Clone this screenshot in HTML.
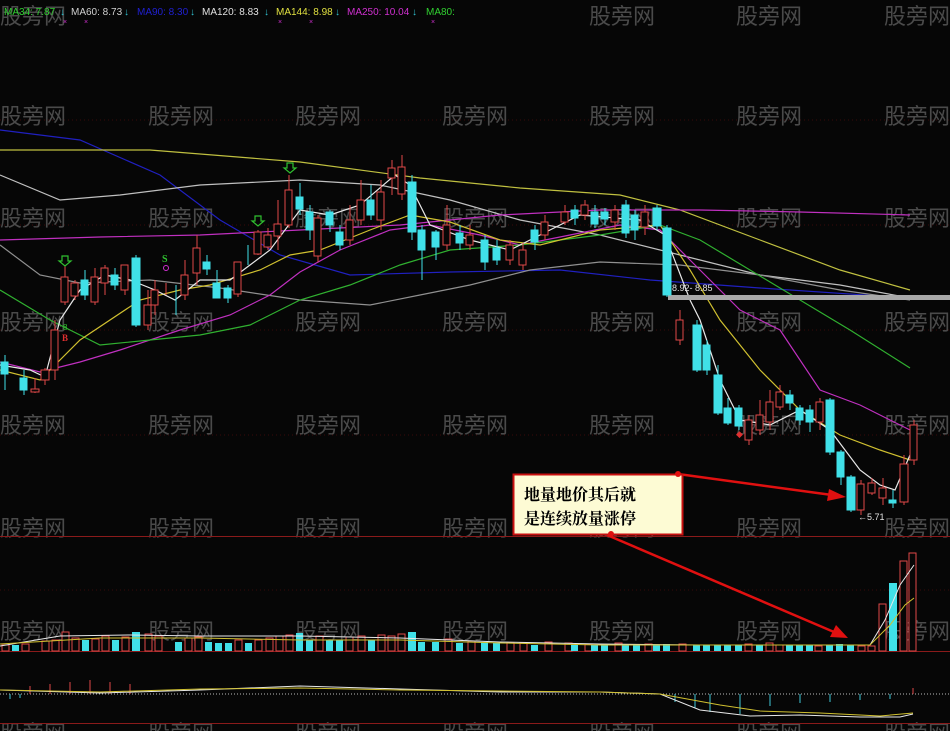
<!DOCTYPE html>
<html><head><meta charset="utf-8"><style>
html,body{margin:0;padding:0;background:#060606;}
svg{display:block}
.wm{font-family:"Liberation Sans","Noto Sans CJK SC",sans-serif;font-size:22px;fill:#4a4a4a;}
.lg{font-family:"Liberation Sans",sans-serif;font-size:10px;}
</style></head><body>
<svg width="950" height="731" viewBox="0 0 950 731" xmlns="http://www.w3.org/2000/svg">
<rect width="950" height="731" fill="#060606"/>
<!-- grid dotted -->
<g stroke="#3a0a0a" stroke-dasharray="1,3">
<line x1="0" y1="120" x2="950" y2="120"/><line x1="0" y1="225" x2="950" y2="225"/>
<line x1="0" y1="330" x2="950" y2="330"/><line x1="0" y1="435" x2="950" y2="435"/>
<line x1="0" y1="590" x2="950" y2="590"/>
</g>
<!-- watermarks -->
<g class="wm">
<text x="0" y="24">股旁网</text><text x="589" y="24">股旁网</text><text x="736" y="24">股旁网</text><text x="884" y="24">股旁网</text>
<text x="0" y="124">股旁网</text><text x="148" y="124">股旁网</text><text x="295" y="124">股旁网</text><text x="442" y="124">股旁网</text><text x="589" y="124">股旁网</text><text x="736" y="124">股旁网</text><text x="884" y="124">股旁网</text>
<text x="0" y="226">股旁网</text><text x="148" y="226">股旁网</text><text x="295" y="226">股旁网</text><text x="442" y="226">股旁网</text><text x="589" y="226">股旁网</text><text x="736" y="226">股旁网</text><text x="884" y="226">股旁网</text>
<text x="0" y="330">股旁网</text><text x="148" y="330">股旁网</text><text x="295" y="330">股旁网</text><text x="442" y="330">股旁网</text><text x="589" y="330">股旁网</text><text x="736" y="330">股旁网</text><text x="884" y="330">股旁网</text>
<text x="0" y="433">股旁网</text><text x="148" y="433">股旁网</text><text x="295" y="433">股旁网</text><text x="442" y="433">股旁网</text><text x="589" y="433">股旁网</text><text x="736" y="433">股旁网</text><text x="884" y="433">股旁网</text>
<text x="0" y="536">股旁网</text><text x="148" y="536">股旁网</text><text x="295" y="536">股旁网</text><text x="442" y="536">股旁网</text><text x="589" y="536">股旁网</text><text x="736" y="536">股旁网</text><text x="884" y="536">股旁网</text>
<text x="0" y="639">股旁网</text><text x="148" y="639">股旁网</text><text x="295" y="639">股旁网</text><text x="442" y="639">股旁网</text><text x="589" y="639">股旁网</text><text x="736" y="639">股旁网</text><text x="884" y="639">股旁网</text>
<text x="0" y="741">股旁网</text><text x="148" y="741">股旁网</text><text x="295" y="741">股旁网</text><text x="442" y="741">股旁网</text><text x="589" y="741">股旁网</text><text x="736" y="741">股旁网</text><text x="884" y="741">股旁网</text>
</g>
<!-- legend -->
<g class="lg">
<text x="4" y="15" fill="#30d030">MA34: 7.87</text><text x="60" y="15" fill="#30c0d0">↓</text>
<text x="71" y="15" fill="#d0d0d0">MA60: 8.73</text><text x="124" y="15" fill="#30c0d0">↓</text>
<text x="137" y="15" fill="#2020d0">MA90: 8.30</text><text x="190" y="15" fill="#30c0d0">↓</text>
<text x="202" y="15" fill="#e0e0e0">MA120: 8.83</text><text x="264" y="15" fill="#30c0d0">↓</text>
<text x="276" y="15" fill="#e0e040">MA144: 8.98</text><text x="335" y="15" fill="#30c0d0">↓</text>
<text x="347" y="15" fill="#d030d0">MA250: 10.04</text><text x="412" y="15" fill="#30c0d0">↓</text>
<text x="426" y="15" fill="#30d030">MA80: </text>
</g>
<g fill="#d030d0" font-size="7" font-family="Liberation Sans"><text x="63" y="24">×</text><text x="84" y="24">×</text><text x="278" y="24">×</text><text x="309" y="24">×</text><text x="431" y="24">×</text></g>
<!-- MA lines -->
<g fill="none" stroke-width="1.2">
<polyline stroke="#2020c0" points="0,130 80,140 160,175 220,220 280,255 350,275 450,272 560,270 650,280 760,288 910,298"/>
<polyline stroke="#c0c040" points="0,150 150,150 300,162 420,178 520,188 620,195 680,210 760,240 840,270 910,290"/>
<polyline stroke="#c0c0c0" points="0,175 60,200 120,195 200,185 300,180 380,185 450,200 520,220 600,235 680,255 760,275 840,285 910,298"/>
<polyline stroke="#909090" points="0,245 40,275 80,283 150,280 220,288 300,300 370,305 420,295 470,285 530,270 600,262 680,265 760,275 840,290 910,300"/>
<polyline stroke="#c030c0" points="0,240 100,237 200,235 300,230 400,225 500,215 600,210 700,210 800,212 910,215"/>
<polyline stroke="#c030c0" points="0,362 40,372 80,362 120,350 180,330 230,315 270,295 300,272 340,250 390,230 430,225 480,235 520,245 570,235 620,225 660,230 700,270 740,310 780,330 820,390 860,405 910,430"/>
<polyline stroke="#30b030" points="0,290 50,320 100,345 150,340 200,335 250,325 300,300 350,285 400,265 450,250 520,245 600,235 660,225 700,240 750,270 800,300 850,330 910,368"/>
<polyline stroke="#d0c030" points="0,370 40,380 80,340 140,300 180,290 210,285 260,270 290,255 320,250 370,230 410,215 450,222 500,240 540,245 600,230 660,225 690,270 720,320 760,370 800,410 840,435 880,450 910,460"/>
<polyline stroke="#e8e8e8" points="0,365 30,370 45,377 60,320 80,290 105,275 130,280 155,290 175,300 200,280 230,280 250,265 270,250 300,210 330,215 360,205 395,175 410,185 430,225 470,240 510,250 540,235 580,215 640,220 665,235 690,300 700,320 720,380 740,420 770,425 800,410 830,430 860,470 880,485 895,490 910,455"/>
</g>
<rect x="668" y="295" width="282" height="5" fill="#a8a8a8"/>
<text x="672" y="291" fill="#e0e0e0" font-size="9" font-family="Liberation Sans">8.92- 8.85</text>
<!-- candles -->
<g stroke="#e04848" fill="#060606" stroke-width="1">
<line x1="35" y1="378" x2="35" y2="393"/><rect x="31" y="389" width="8" height="3"/>
<line x1="45" y1="368" x2="45" y2="385"/><rect x="41" y="370" width="8" height="10"/>
<line x1="55" y1="320" x2="55" y2="380"/><rect x="51" y="330" width="7" height="40"/>
<line x1="65" y1="265" x2="65" y2="305"/><rect x="61" y="277" width="7" height="25"/>
<line x1="75" y1="280" x2="75" y2="300"/><rect x="71" y="283" width="7" height="13"/>
<line x1="95" y1="268" x2="95" y2="305"/><rect x="91" y="277" width="7" height="25"/>
<line x1="105" y1="265" x2="105" y2="295"/><rect x="101" y="268" width="7" height="15"/>
<line x1="125" y1="265" x2="125" y2="295"/><rect x="121" y="265" width="7" height="25"/>
<line x1="148" y1="290" x2="148" y2="330"/><rect x="144" y="305" width="7" height="20"/>
<line x1="155" y1="280" x2="155" y2="315"/><rect x="151" y="290" width="7" height="15"/>
<line x1="166" y1="283" x2="166" y2="295"/>
<line x1="185" y1="260" x2="185" y2="300"/><rect x="181" y="275" width="7" height="20"/>
<line x1="197" y1="235" x2="197" y2="285"/><rect x="193" y="248" width="7" height="25"/>
<line x1="238" y1="262" x2="238" y2="297"/><rect x="234" y="262" width="7" height="32"/>
<line x1="258" y1="230" x2="258" y2="255"/><rect x="254" y="232" width="7" height="22"/>
<line x1="268" y1="228" x2="268" y2="250"/><rect x="264" y="235" width="7" height="12"/>
<line x1="278" y1="200" x2="278" y2="250"/><rect x="274" y="224" width="7" height="12"/>
<line x1="289" y1="175" x2="289" y2="228"/><rect x="285" y="190" width="7" height="35"/>
<line x1="318" y1="215" x2="318" y2="262"/><rect x="314" y="218" width="7" height="38"/>
<line x1="350" y1="205" x2="350" y2="245"/><rect x="346" y="220" width="7" height="20"/>
<line x1="361" y1="180" x2="361" y2="225"/><rect x="357" y="200" width="7" height="20"/>
<line x1="381" y1="180" x2="381" y2="230"/><rect x="377" y="192" width="7" height="28"/>
<line x1="392" y1="160" x2="392" y2="195"/><rect x="388" y="168" width="7" height="10"/>
<line x1="402" y1="155" x2="402" y2="200"/><rect x="398" y="167" width="7" height="27"/>
<line x1="447" y1="205" x2="447" y2="250"/><rect x="443" y="225" width="7" height="20"/>
<line x1="470" y1="225" x2="470" y2="250"/><rect x="466" y="235" width="7" height="10"/>
<line x1="510" y1="240" x2="510" y2="265"/><rect x="506" y="245" width="7" height="15"/>
<line x1="523" y1="243" x2="523" y2="270"/><rect x="519" y="250" width="7" height="15"/>
<line x1="545" y1="215" x2="545" y2="240"/><rect x="541" y="222" width="7" height="13"/>
<line x1="565" y1="205" x2="565" y2="225"/><rect x="561" y="212" width="7" height="10"/>
<line x1="585" y1="200" x2="585" y2="220"/><rect x="581" y="205" width="7" height="10"/>
<line x1="615" y1="205" x2="615" y2="230"/><rect x="611" y="210" width="7" height="12"/>
<line x1="645" y1="205" x2="645" y2="235"/><rect x="641" y="212" width="7" height="15"/>
<line x1="680" y1="310" x2="680" y2="345"/><rect x="676" y="320" width="7" height="20"/>
<line x1="749" y1="415" x2="749" y2="445"/><rect x="745" y="420" width="7" height="20"/>
<line x1="760" y1="400" x2="760" y2="435"/><rect x="756" y="415" width="7" height="15"/>
<line x1="770" y1="390" x2="770" y2="430"/><rect x="766" y="402" width="7" height="20"/>
<line x1="780" y1="385" x2="780" y2="410"/><rect x="776" y="392" width="7" height="15"/>
<line x1="820" y1="398" x2="820" y2="430"/><rect x="816" y="402" width="7" height="20"/>
<line x1="861" y1="480" x2="861" y2="515"/><rect x="857" y="484" width="7" height="26"/>
<line x1="872" y1="478" x2="872" y2="495"/><rect x="868" y="483" width="7" height="10"/>
<line x1="883" y1="478" x2="883" y2="505"/><rect x="879" y="488" width="7" height="10"/>
<line x1="904" y1="455" x2="904" y2="505"/><rect x="900" y="464" width="8" height="38"/>
<line x1="914" y1="420" x2="914" y2="465"/><rect x="910" y="425" width="7" height="35"/>
</g>
<g fill="#40e0e8" stroke="#40e0e8" stroke-width="1">
<line x1="5" y1="355" x2="5" y2="390"/><rect x="1" y="362" width="7" height="12"/>
<line x1="24" y1="370" x2="24" y2="395"/><rect x="20" y="378" width="7" height="12"/>
<line x1="85" y1="270" x2="85" y2="300"/><rect x="81" y="280" width="7" height="15"/>
<line x1="115" y1="268" x2="115" y2="290"/><rect x="111" y="275" width="7" height="10"/>
<line x1="136" y1="255" x2="136" y2="327"/><rect x="132" y="258" width="8" height="67"/>
<line x1="176" y1="285" x2="176" y2="315"/>
<line x1="207" y1="255" x2="207" y2="275"/><rect x="203" y="262" width="7" height="7"/>
<line x1="217" y1="270" x2="217" y2="297"/><rect x="213" y="283" width="7" height="15"/>
<line x1="228" y1="285" x2="228" y2="303"/><rect x="224" y="288" width="7" height="10"/>
<line x1="248" y1="245" x2="248" y2="265"/>
<line x1="300" y1="183" x2="300" y2="215"/><rect x="296" y="197" width="7" height="12"/>
<line x1="310" y1="205" x2="310" y2="240"/><rect x="306" y="212" width="7" height="18"/>
<line x1="330" y1="210" x2="330" y2="232"/><rect x="326" y="212" width="7" height="13"/>
<line x1="340" y1="225" x2="340" y2="250"/><rect x="336" y="232" width="7" height="13"/>
<line x1="371" y1="185" x2="371" y2="220"/><rect x="367" y="200" width="7" height="15"/>
<line x1="412" y1="175" x2="412" y2="240"/><rect x="408" y="182" width="8" height="50"/>
<line x1="422" y1="225" x2="422" y2="280"/><rect x="418" y="230" width="7" height="20"/>
<line x1="436" y1="230" x2="436" y2="260"/><rect x="432" y="232" width="7" height="15"/>
<line x1="460" y1="225" x2="460" y2="250"/><rect x="456" y="233" width="7" height="10"/>
<line x1="485" y1="235" x2="485" y2="270"/><rect x="481" y="240" width="7" height="22"/>
<line x1="497" y1="240" x2="497" y2="265"/><rect x="493" y="248" width="7" height="12"/>
<line x1="535" y1="225" x2="535" y2="250"/><rect x="531" y="230" width="7" height="12"/>
<line x1="575" y1="205" x2="575" y2="225"/><rect x="571" y="210" width="7" height="8"/>
<line x1="595" y1="205" x2="595" y2="228"/><rect x="591" y="212" width="7" height="12"/>
<line x1="605" y1="208" x2="605" y2="225"/><rect x="601" y="212" width="7" height="7"/>
<line x1="626" y1="200" x2="626" y2="238"/><rect x="622" y="205" width="7" height="28"/>
<line x1="635" y1="210" x2="635" y2="240"/><rect x="631" y="215" width="7" height="15"/>
<line x1="657" y1="205" x2="657" y2="230"/><rect x="653" y="208" width="8" height="18"/>
<line x1="667" y1="225" x2="667" y2="297"/><rect x="663" y="228" width="8" height="67"/>
<line x1="697" y1="320" x2="697" y2="372"/><rect x="693" y="325" width="8" height="45"/>
<line x1="707" y1="340" x2="707" y2="375"/><rect x="703" y="345" width="7" height="25"/>
<line x1="718" y1="365" x2="718" y2="415"/><rect x="714" y="375" width="8" height="38"/>
<line x1="728" y1="398" x2="728" y2="425"/><rect x="724" y="408" width="7" height="15"/>
<line x1="739" y1="405" x2="739" y2="430"/><rect x="735" y="408" width="7" height="18"/>
<line x1="790" y1="390" x2="790" y2="410"/><rect x="786" y="395" width="7" height="8"/>
<line x1="800" y1="405" x2="800" y2="425"/><rect x="796" y="408" width="7" height="12"/>
<line x1="810" y1="405" x2="810" y2="432"/><rect x="806" y="410" width="7" height="12"/>
<line x1="830" y1="398" x2="830" y2="455"/><rect x="826" y="400" width="8" height="52"/>
<line x1="841" y1="450" x2="841" y2="485"/><rect x="837" y="452" width="7" height="25"/>
<line x1="851" y1="475" x2="851" y2="512"/><rect x="847" y="477" width="8" height="33"/>
<line x1="893" y1="490" x2="893" y2="508"/><rect x="889" y="500" width="7" height="3"/>
</g>
<text x="858" y="520" fill="#e0e0e0" font-size="9" font-family="Liberation Sans">←5.71</text>
<!-- signals -->
<g fill="none" stroke="#30c030" stroke-width="1.2">
<path d="M62,256 h6 v5 h3 l-6,5 l-6,-5 h3z"/><path d="M255,216 h6 v5 h3 l-6,5 l-6,-5 h3z"/><path d="M287,163 h6 v5 h3 l-6,5 l-6,-5 h3z"/>
</g>
<text x="162" y="262" fill="#30c030" font-size="10" font-weight="bold" font-family="Liberation Serif">S</text>
<text x="63" y="330" fill="#30c030" font-size="8" font-family="Liberation Sans">8</text>
<text x="62" y="341" fill="#e03030" font-size="9" font-weight="bold" font-family="Liberation Serif">B</text>
<circle cx="166" cy="268" r="2.5" fill="none" stroke="#d030d0"/>
<text x="736" y="437" fill="#e03030" font-size="9">◆</text>
<!-- panel separators -->
<line x1="0" y1="536.5" x2="950" y2="536.5" stroke="#8a1a1a"/>
<line x1="0" y1="651.5" x2="950" y2="651.5" stroke="#8a1a1a"/>
<line x1="0" y1="723.5" x2="950" y2="723.5" stroke="#8a1a1a"/>
<!-- volume -->
<g stroke="#e04848" fill="#060606">
<rect x="2" y="645" width="7" height="6"/><rect x="22" y="644" width="7" height="7"/><rect x="42" y="641" width="7" height="10"/><rect x="52" y="640" width="7" height="11"/><rect x="62" y="632" width="7" height="19"/><rect x="72" y="638" width="7" height="13"/><rect x="92" y="639" width="7" height="12"/><rect x="102" y="636" width="7" height="15"/><rect x="122" y="637" width="7" height="14"/><rect x="145" y="634" width="7" height="17"/><rect x="155" y="636" width="7" height="15"/><rect x="185" y="638" width="7" height="13"/><rect x="195" y="637" width="7" height="14"/><rect x="235" y="640" width="7" height="11"/><rect x="255" y="640" width="7" height="11"/><rect x="266" y="638" width="7" height="13"/><rect x="276" y="636" width="7" height="15"/><rect x="286" y="635" width="7" height="16"/><rect x="316" y="636" width="7" height="15"/><rect x="346" y="637" width="7" height="14"/><rect x="358" y="636" width="7" height="15"/><rect x="378" y="635" width="7" height="16"/><rect x="388" y="636" width="7" height="15"/><rect x="398" y="634" width="7" height="17"/><rect x="445" y="639" width="7" height="12"/><rect x="468" y="641" width="7" height="10"/><rect x="507" y="643" width="7" height="8"/><rect x="520" y="643" width="7" height="8"/><rect x="545" y="642" width="7" height="9"/><rect x="565" y="643" width="7" height="8"/><rect x="585" y="644" width="7" height="7"/><rect x="615" y="643" width="7" height="8"/><rect x="645" y="644" width="7" height="7"/><rect x="679" y="644" width="7" height="7"/><rect x="745" y="644" width="7" height="7"/><rect x="766" y="643" width="7" height="8"/><rect x="776" y="645" width="7" height="6"/><rect x="815" y="646" width="7" height="5"/><rect x="858" y="646" width="7" height="5"/><rect x="868" y="646" width="7" height="5"/><rect x="879" y="604" width="7" height="47"/><rect x="900" y="561" width="7" height="90"/><rect x="909" y="553" width="7" height="98"/>
</g>
<g fill="#40e0e8">
<rect x="12" y="645" width="7" height="6"/><rect x="82" y="640" width="7" height="11"/><rect x="112" y="640" width="7" height="11"/><rect x="132" y="632" width="8" height="19"/><rect x="175" y="642" width="7" height="9"/><rect x="205" y="642" width="7" height="9"/><rect x="215" y="643" width="7" height="8"/><rect x="225" y="643" width="7" height="8"/><rect x="245" y="643" width="7" height="8"/><rect x="296" y="633" width="7" height="18"/><rect x="306" y="640" width="7" height="11"/><rect x="326" y="640" width="7" height="11"/><rect x="336" y="640" width="7" height="11"/><rect x="368" y="640" width="7" height="11"/><rect x="408" y="632" width="8" height="19"/><rect x="418" y="642" width="7" height="9"/><rect x="432" y="642" width="7" height="9"/><rect x="456" y="643" width="7" height="8"/><rect x="481" y="642" width="7" height="9"/><rect x="493" y="643" width="7" height="8"/><rect x="531" y="645" width="7" height="6"/><rect x="571" y="645" width="7" height="6"/><rect x="591" y="645" width="7" height="6"/><rect x="601" y="645" width="7" height="6"/><rect x="622" y="645" width="7" height="6"/><rect x="633" y="644" width="7" height="7"/><rect x="653" y="645" width="7" height="6"/><rect x="663" y="644" width="7" height="7"/><rect x="693" y="645" width="7" height="6"/><rect x="703" y="645" width="7" height="6"/><rect x="714" y="645" width="7" height="6"/><rect x="724" y="645" width="7" height="6"/><rect x="735" y="645" width="7" height="6"/><rect x="756" y="645" width="7" height="6"/><rect x="786" y="645" width="7" height="6"/><rect x="796" y="645" width="7" height="6"/><rect x="806" y="645" width="7" height="6"/><rect x="826" y="645" width="7" height="6"/><rect x="836" y="644" width="7" height="7"/><rect x="847" y="645" width="7" height="6"/><rect x="889" y="583" width="8" height="68"/>
</g>
<polyline fill="none" stroke="#e8e8e8" points="0,646 60,636 130,635 200,636 300,636 400,638 500,642 600,644 700,645 870,645 885,620 900,585 914,565"/>
<polyline fill="none" stroke="#d0c030" points="0,644 100,638 200,638 300,640 400,640 500,643 600,645 870,645 890,625 905,605 914,598"/>
<!-- macd -->
<line x1="0" y1="694" x2="950" y2="694" stroke="#bbb" stroke-dasharray="1,2"/>
<g stroke="#e04848"><line x1="30" y1="694" x2="30" y2="686"/><line x1="50" y1="694" x2="50" y2="684"/><line x1="70" y1="694" x2="70" y2="682"/><line x1="90" y1="694" x2="90" y2="680"/><line x1="110" y1="694" x2="110" y2="682"/><line x1="130" y1="694" x2="130" y2="684"/><line x1="913" y1="694" x2="913" y2="688"/></g>
<g stroke="#40c8d8"><line x1="675" y1="694" x2="675" y2="702"/><line x1="695" y1="694" x2="695" y2="708"/><line x1="710" y1="694" x2="710" y2="712"/><line x1="740" y1="694" x2="740" y2="714"/><line x1="770" y1="694" x2="770" y2="706"/><line x1="800" y1="694" x2="800" y2="703"/><line x1="830" y1="694" x2="830" y2="702"/><line x1="860" y1="694" x2="860" y2="700"/><line x1="890" y1="694" x2="890" y2="699"/><line x1="10" y1="694" x2="10" y2="699"/><line x1="20" y1="694" x2="20" y2="698"/></g>
<polyline fill="none" stroke="#e8e8e8" points="0,690 100,693 200,690 300,686 400,689 500,692 600,692 660,694 700,710 750,716 800,715 860,717 900,717 913,714"/>
<polyline fill="none" stroke="#d0c030" points="0,690 100,692 200,689 300,688 400,690 500,691 600,692 660,694 720,705 760,711 820,713 880,716 913,713"/>
<!-- annotation -->
<g stroke="#e01010" stroke-width="2.5" fill="#e01010">
<line x1="678" y1="474" x2="832" y2="495"/>
<path d="M846,497 L829,489 L827,501 Z" stroke="none"/>
<line x1="607" y1="535" x2="834" y2="632"/>
<path d="M848,638 L836,625 L830,637 Z" stroke="none"/>
</g>
<rect x="513.5" y="474.5" width="169" height="60" fill="#fdfbd4" stroke="#c81010" stroke-width="2"/>
<circle cx="678" cy="474" r="3" fill="#e01010"/><circle cx="611" cy="534" r="3" fill="#e01010"/>
<g font-family="'Liberation Serif','Noto Serif CJK SC',serif" font-size="16" font-weight="bold" fill="#000">
<text x="524" y="500">地量地价其后就</text>
<text x="524" y="524">是连续放量涨停</text>
</g>
</svg>
</body></html>
